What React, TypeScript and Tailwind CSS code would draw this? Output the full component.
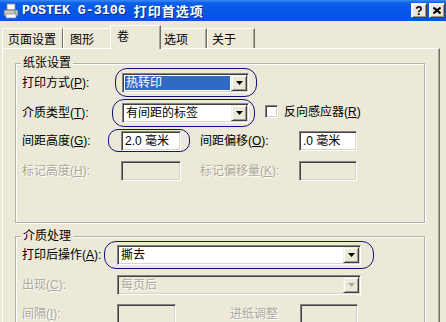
import React from "react";

const sunken =
  "border border-t-[#848284] border-l-[#848284] border-b-white border-r-white shadow-[inset_1px_1px_0_#424142,inset_-1px_-1px_0_#d6d3ce]";
const raised =
  "border border-t-[#f1efe2] border-l-[#f1efe2] border-b-[#404040] border-r-[#404040] shadow-[inset_1px_1px_0_#fff,inset_-1px_-1px_0_#9d9a8c]";
const dis = "text-[#aca899] [text-shadow:1px_1px_0_#fff]";

function U({ c }: { c: string }) {
  return <span className="underline underline-offset-[1px]">{c}</span>;
}

function Label({ text, k, className = "", disabled = false }: { text: string; k: string; className?: string; disabled?: boolean }) {
  return (
    <div className={`shrink-0 whitespace-nowrap leading-[14px] ${disabled ? dis : ""} ${className}`}>
      {text}(<U c={k} />):
    </div>
  );
}

function Arrow({ disabled = false }: { disabled?: boolean }) {
  return (
    <div className={`w-[16px] h-[16px] shrink-0 flex items-center justify-center bg-[#ece9d8] ${raised}`}>
      <svg width="7" height="4" viewBox="0 0 7 4">
        <polygon points="0,0 7,0 3.5,4" fill={disabled ? "#aca899" : "#000"} />
      </svg>
    </div>
  );
}

function Combo({ text, className, selected = false, disabled = false }: { text: string; className: string; selected?: boolean; disabled?: boolean }) {
  return (
    <div className={`h-[20px] p-[1px] flex shrink-0 ${sunken} ${disabled ? "bg-[#ece9d8]" : "bg-white"} ${className}`}>
      <div className="flex-1 flex items-center pl-[1px] pr-[1px]">
        <div
          className={`h-[14px] flex-1 leading-[14px] pl-[1px] ${
            selected ? "bg-[#316ac5] text-white" : disabled ? dis : ""
          }`}
        >
          {text}
        </div>
      </div>
      <Arrow disabled={disabled} />
    </div>
  );
}

function Input({ text = "", className, disabled = false }: { text?: string; className: string; disabled?: boolean }) {
  return (
    <div
      className={`h-[20px] shrink-0 flex items-center pl-[3px] leading-[14px] ${sunken} ${
        disabled ? "bg-[#ece9d8]" : "bg-white"
      } ${className}`}
    >
      {text}
    </div>
  );
}

function Group({ title, className, children }: { title: string; className: string; children: React.ReactNode }) {
  return (
    <div
      className={`relative w-[410px] shrink-0 border border-[#b5b2a3] shadow-[1px_1px_0_#fff,inset_1px_1px_0_#fff] ${className}`}
    >
      <div className="absolute -top-[8px] left-[5px] px-[2px] bg-[#ece9d8] leading-[14px]">{title}</div>
      {children}
    </div>
  );
}

function Ellipse({ c }: { c: string }) {
  return <div className={`absolute border border-[#12127e] pointer-events-none ${c}`} />;
}

export default function App() {
  return (
    <div className="relative w-[446px] h-[322px] overflow-hidden bg-[#ece9d8] flex flex-col text-[12px] text-black font-['Liberation_Sans','Noto_Sans_CJK_SC',sans-serif]">
      {/* Title bar */}
      <div className="h-[21px] shrink-0 flex items-center pl-[3px] pr-[1px] bg-[linear-gradient(to_bottom,#3d8af7_0%,#0a5ee8_15%,#0757e6_55%,#0653dc_100%)]">
        <svg width="16" height="16" viewBox="0 0 16 16" className="shrink-0">
          <rect x="4" y="1" width="8" height="6" fill="#fff" stroke="#8a8a8a" strokeWidth="0.8" />
          <path d="M1 7 L15 7 L15 13 L1 13 Z" fill="#c8c8c8" stroke="#606060" strokeWidth="0.8" />
          <rect x="3" y="11" width="10" height="4" fill="#fff" stroke="#8a8a8a" strokeWidth="0.8" />
          <rect x="11" y="8.5" width="2" height="1.2" fill="#2a6" />
        </svg>
        <div className="ml-[3px] text-white font-bold flex items-center whitespace-nowrap [text-shadow:1px_1px_0_#0a2a8a]">
          <span className="font-['Liberation_Mono',monospace] text-[13.3px] leading-[14px]">POSTEK G-3106</span>
          <span className="ml-[8px] font-['Noto_Sans_CJK_SC',sans-serif] text-[13px] tracking-[1px] leading-[14px]">打印首选项</span>
        </div>
        <div className="ml-auto flex gap-[2px]">
          <div className={`w-[16px] h-[15px] flex items-center justify-center bg-[#ece9d8] ${raised} font-bold text-[12px] leading-[12px]`}>?</div>
          <div className={`w-[16px] h-[15px] flex items-center justify-center bg-[#ece9d8] ${raised}`}>
            <svg width="8" height="7" viewBox="0 0 8 7">
              <path d="M0.5 0.5 L7.5 6.5 M7.5 0.5 L0.5 6.5" stroke="#000" strokeWidth="2" />
            </svg>
          </div>
        </div>
      </div>

      {/* Tabs */}
      <div className="h-[27px] shrink-0 flex items-end pl-[2px]">
        <div className="w-[61px] h-[20px] pl-[5px] pt-[4px] leading-[14px] border-t border-l border-r border-t-white border-l-white border-r-[#716f64] whitespace-nowrap">
          页面设置
        </div>
        <div className="w-[47px] h-[20px] pl-[6px] pt-[4px] leading-[14px] border-t border-l border-t-white border-l-white whitespace-nowrap">
          图形
        </div>
        <div className="relative z-10 -mb-[1px] w-[51px] h-[24px] pl-[6px] pt-[4px] leading-[14px] bg-[#ece9d8] border-t border-l border-r border-t-white border-l-white border-r-[#716f64] shadow-[inset_-1px_0_0_#aca899] whitespace-nowrap">
          卷
        </div>
        <div className="w-[46px] h-[20px] pl-[3px] pt-[4px] leading-[14px] border-t border-r border-t-white border-r-[#716f64] shadow-[inset_-1px_0_0_#aca899] whitespace-nowrap">
          选项
        </div>
        <div className="w-[48px] h-[20px] pl-[4px] pt-[4px] leading-[14px] border-t border-l border-r border-t-white border-l-white border-r-[#716f64] shadow-[inset_-1px_0_0_#aca899] whitespace-nowrap">
          关于
        </div>
      </div>

      {/* Panel */}
      <div className="ml-[2px] w-[438px] flex-1 flex flex-col border-t border-l border-r border-t-white border-l-white border-r-[#716f64] shadow-[inset_-1px_0_0_#aca899] pl-[12px] pt-[14px]">
        <Group title="纸张设置" className="h-[160px] pl-[6px] pt-[9px]">
          <div className="flex items-center h-[20px]">
            <Label text="打印方式" k="P" className="w-[100px]" />
            <Combo text="热转印" selected className="w-[127px]" />
          </div>
          <div className="flex items-center h-[20px] mt-[10px]">
            <Label text="介质类型" k="T" className="w-[100px]" />
            <Combo text="有间距的标签" className="w-[127px]" />
            <div className={`ml-[16px] -mt-[3px] w-[13px] h-[13px] bg-white ${sunken}`} />
            <div className="ml-[6px] leading-[14px] -mt-[3px] whitespace-nowrap">
              反向感应器(<U c="R" />)
            </div>
          </div>
          <div className="flex items-center h-[20px] mt-[8px]">
            <Label text="间距高度" k="G" className="w-[99px]" />
            <Input text="2.0 毫米" className="w-[60px]" />
            <Label text="间距偏移" k="O" className="ml-[19px] w-[99px]" />
            <Input text=".0 毫米" className="w-[58px]" />
          </div>
          <div className="flex items-center h-[20px] mt-[10px]">
            <Label text="标记高度" k="H" disabled className="w-[99px]" />
            <Input disabled className="w-[60px]" />
            <Label text="标记偏移量" k="K" disabled className="ml-[19px] w-[99px]" />
            <Input disabled className="w-[58px]" />
          </div>
        </Group>

        <Group title="介质处理" className="mt-[13px] h-[110px] pl-[6px] pt-[8px]">
          <div className="flex items-center h-[20px]">
            <Label text="打印后操作" k="A" className="w-[95px]" />
            <Combo text="撕去" className="w-[244px]" />
          </div>
          <div className="flex items-center h-[20px] mt-[10px]">
            <Label text="出现" k="C" disabled className="w-[95px]" />
            <Combo text="每页后" disabled className="w-[244px]" />
          </div>
          <div className="flex items-center h-[20px] mt-[9px]">
            <Label text="间隔" k="I" disabled className="w-[95px]" />
            <Input disabled className="w-[59px]" />
            <div className={`ml-[54px] w-[70px] leading-[14px] whitespace-nowrap ${dis}`}>进纸调整</div>
            <Input disabled className="w-[58px]" />
          </div>
        </Group>
      </div>

      {/* Annotation ellipses */}
      <Ellipse c="left-[115px] top-[68px] w-[142px] h-[29px] rounded-[12px]" />
      <Ellipse c="left-[112px] top-[99px] w-[143px] h-[28px] rounded-[12px]" />
      <Ellipse c="left-[108px] top-[129px] w-[82px] h-[23px] rounded-[10px]" />
      <Ellipse c="left-[104px] top-[241px] w-[270px] h-[28px] rounded-[12px]" />
    </div>
  );
}
